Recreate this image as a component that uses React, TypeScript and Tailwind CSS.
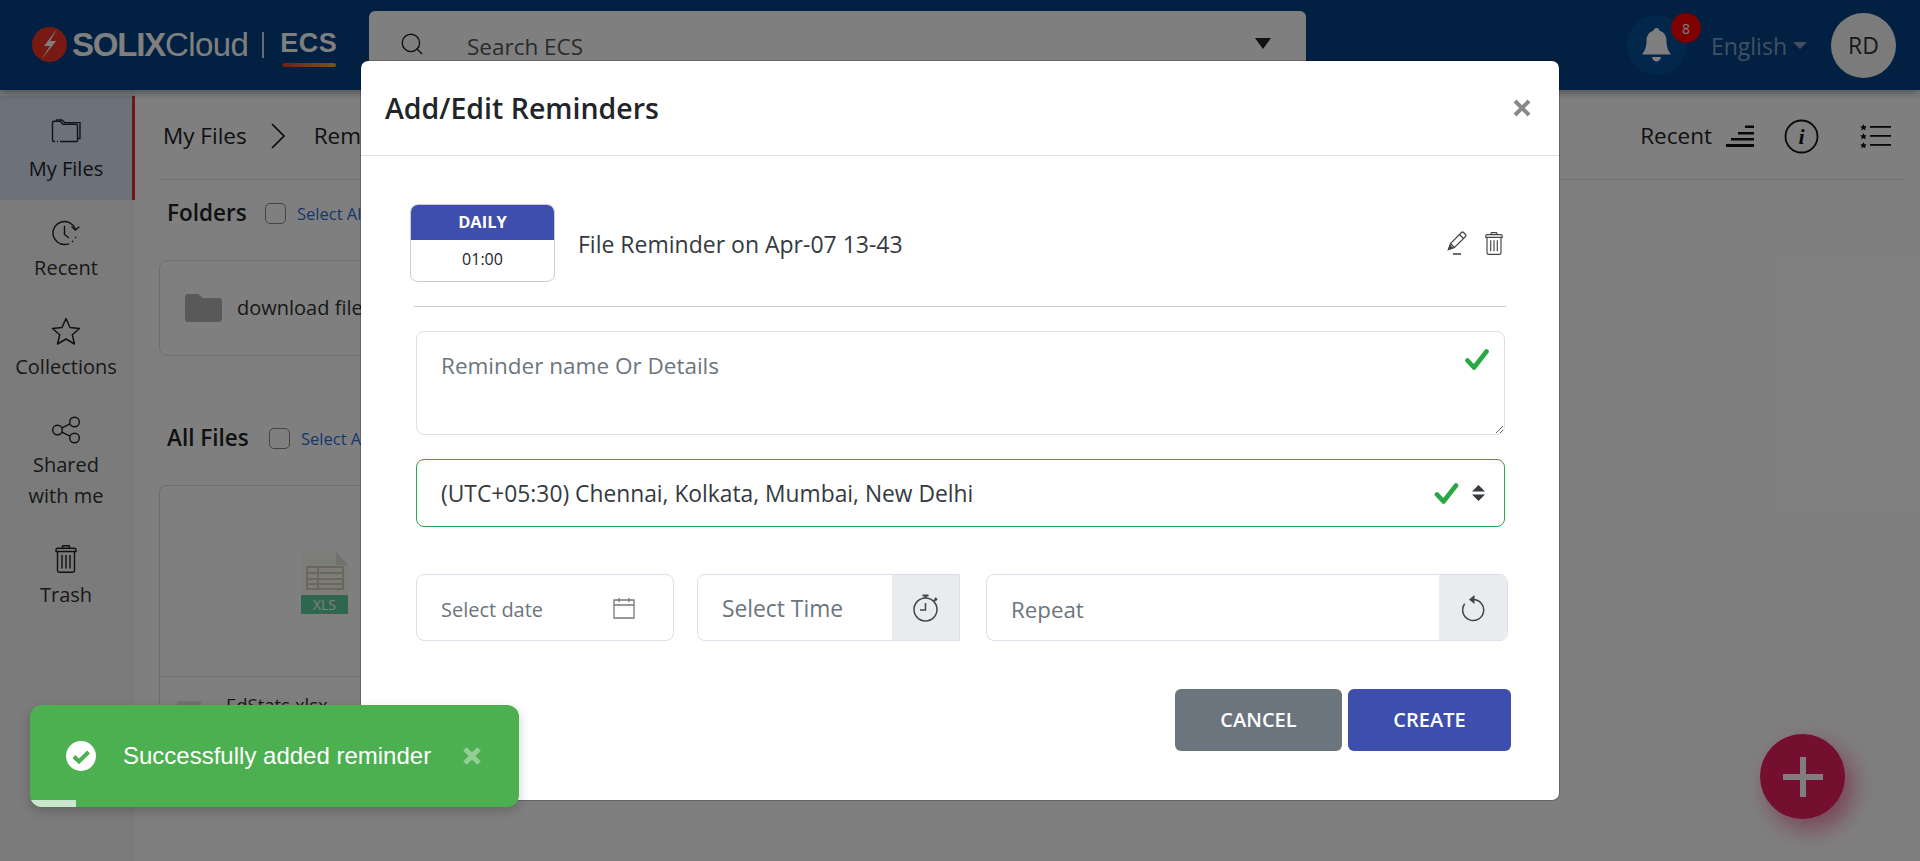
import { Search } from "lucide-react";

const sans = { fontFamily: '"Open Sans", sans-serif' };

function MyFilesIcon() {
  return (
    <svg width="30" height="24" viewBox="0 0 30 24" fill="none" stroke="#1f2937" strokeWidth="1.4">
      <path d="M1.5 21V3.5c0-.8.5-1.3 1.2-1.3h6.6l2.6 3h13.4c.7 0 1.2.5 1.2 1.2V21.6c0 .5-.4.9-1 .9H9" />
      <path d="M1.5 21c0 1 .5 1.5 1.2 1.5H4M6 22.5h1" />
      <path d="M5 1h6l2.6 2.6H29V19.5h-2" />
    </svg>
  );
}

function RecentIcon() {
  return (
    <svg width="30" height="26" viewBox="0 0 30 26" fill="none" stroke="#222" strokeWidth="1.4" strokeLinecap="round">
      <path d="M24 8.5A11.5 11.5 0 1 0 14 24.5c1.4 0 2.6-.2 3.6-.6" />
      <path d="M13.5 6.5v8l4 3" />
      <path d="M28 7l-3.6 3L21 7" />
      <path d="M21.5 21.5l.4-.3M24.5 17.5l.1-.3" />
    </svg>
  );
}

function StarIcon() {
  return (
    <svg width="30" height="28" viewBox="0 0 30 28" fill="none" stroke="#222" strokeWidth="1.5" strokeLinejoin="round">
      <path d="M15 1.5l4 9 9.5 1-7.2 6.3 2.2 9.2-8.5-5-8.5 5 2.2-9.2-7.2-6.3 9.5-1z" />
    </svg>
  );
}

function ShareIcon() {
  return (
    <svg width="30" height="28" viewBox="0 0 30 28" fill="none" stroke="#222" strokeWidth="1.4">
      <circle cx="6.5" cy="14" r="4.8" />
      <circle cx="23.5" cy="6" r="4.8" />
      <circle cx="23.5" cy="22" r="4.8" />
      <path d="M10.8 11.8l8.4-3.9M10.8 16.2l8.4 3.9" />
    </svg>
  );
}

function TrashIcon({ w, h, color }: { w: number; h: number; color: string }) {
  return (
    <svg width={w} height={h} viewBox="0 0 22 28" fill="none" stroke={color} strokeWidth="1.4">
      <path d="M7.5 3V1.5c0-.4.3-.7.7-.7h5.6c.4 0 .7.3.7.7V3" />
      <path d="M1 6.5V5c0-1 .8-1.8 1.8-1.8h16.4c1 0 1.8.8 1.8 1.8v1.5z" />
      <path d="M2.5 6.5v19c0 1 .7 1.7 1.7 1.7h13.6c1 0 1.7-.7 1.7-1.7v-19" />
      <path d="M7 10v13.5M11 10v13.5M15 10v13.5" />
    </svg>
  );
}

function SortIcon() {
  return (
    <svg width="28" height="22" viewBox="0 0 28 22" fill="#111">
      <rect x="0" y="19" width="28" height="3" />
      <rect x="5" y="13" width="23" height="2.5" />
      <rect x="12" y="7" width="16" height="2.5" />
      <rect x="19" y="0.5" width="9" height="2.5" />
    </svg>
  );
}

function StarListIcon() {
  return (
    <svg width="31" height="24" viewBox="0 0 31 24" fill="#111">
      <path d="M3.5 0l1 2.2 2.4.2-1.8 1.6.6 2.4-2.2-1.3L1.3 6.4l.6-2.4L.1 2.4l2.4-.2z" />
      <path d="M3.5 9l1 2.2 2.4.2-1.8 1.6.6 2.4-2.2-1.3-2.2 1.3.6-2.4-1.8-1.6 2.4-.2z" />
      <path d="M3.5 18l1 2.2 2.4.2-1.8 1.6.6 2.4-2.2-1.3-2.2 1.3.6-2.4-1.8-1.6 2.4-.2z" />
      <rect x="10" y="2" width="21" height="1.8" />
      <rect x="10" y="11" width="21" height="1.8" />
      <rect x="10" y="20" width="21" height="1.8" />
    </svg>
  );
}

function GreenCheck({ w, h }: { w: number; h: number }) {
  return (
    <svg width={w} height={h} viewBox="0 0 24 21" fill="none" stroke="#28a745" strokeWidth="4.6" strokeLinecap="round" strokeLinejoin="round">
      <path d="M2.5 11.5l6.5 7L21.5 2.5" />
    </svg>
  );
}

function SideItem({ icon, label, active }: { icon: React.ReactNode; label: React.ReactNode; active?: boolean }) {
  if (active) {
    return (
      <div className="flex h-[104px] flex-col items-center border-r-[3px] border-[#e52b2b] bg-[#d8e3f5] pt-[21px]">
        <div className="flex h-[27px] items-center justify-center">{icon}</div>
        <div className="mt-[9px] text-center text-[20px] leading-[31px] text-[#222]">{label}</div>
      </div>
    );
  }
  return (
    <div className="flex flex-col items-center pr-[3px]">
      <div className="flex h-[27px] items-center justify-center">{icon}</div>
      <div className="mt-[6px] text-center text-[20px] leading-[31px] text-[#333]">{label}</div>
    </div>
  );
}

function SelectRow({ title, titleWidth }: { title: string; titleWidth: string }) {
  return (
    <div className="flex h-[30px] items-center pl-[8px]">
      <div className={`${titleWidth} text-[22.5px] font-semibold text-[#222]`}>{title}</div>
      <div className="h-[21px] w-[21px] rounded-[5px] border border-[#888] bg-white"></div>
      <div className="mt-[2px] ml-[11px] text-[16.5px] font-medium text-[#2a6fd6]">Select All</div>
    </div>
  );
}

export default function App() {
  return (
    <div className="relative h-[861px] w-[1920px] overflow-hidden bg-white" style={sans}>
      <header className="relative z-10 flex h-[90px] bg-[#024184] shadow-[0_3px_8px_rgba(0,0,0,0.35)]">
        <div className="flex h-[90px] w-[369px] shrink-0 items-center pb-[1px] pl-[32px]">
          <svg width="35" height="35" viewBox="0 0 35 35">
            <circle cx="17.5" cy="17.5" r="17.5" fill="#f03526" />
            <path d="M25 2L12 19h6L9 33l15-19h-6z" fill="#fff" />
          </svg>
          <div className="ml-[5px] flex items-baseline text-[33px] leading-none text-white" style={{ fontFamily: '"Liberation Sans", sans-serif' }}>
            <span className="font-bold tracking-[-1.2px]">SOLIX</span>
            <span className="tracking-[-0.6px]">Cloud</span>
          </div>
          <div className="ml-[14px] h-[26px] w-[2px] bg-white/80"></div>
          <div className="ml-[16px] flex flex-col items-center pt-[6px]">
            <div className="text-[27px] leading-[28px] font-bold tracking-[0.5px] text-white" style={{ fontFamily: '"Liberation Sans", sans-serif' }}>ECS</div>
            <div className="mt-[6px] h-[4px] w-[54px] rounded-full bg-gradient-to-r from-[#e8342a] to-[#f5a623]"></div>
          </div>
        </div>
        <div className="mt-[11px] flex h-[70px] w-[937px] rounded-t-[6px] bg-white pt-[20px] pl-[30px]">
          <Search size={26} strokeWidth={1.3} color="#222" />
          <div className="ml-[42px] text-[22.5px] leading-[32px] text-[#555]">Search ECS</div>
          <div className="mt-[7px] mr-[35px] ml-auto h-0 w-0 border-x-[8px] border-t-[11px] border-x-transparent border-t-[#222]"></div>
        </div>
        <div className="ml-auto flex items-center pr-[24px]">
          <div className="relative flex h-[60px] w-[60px] items-center justify-center rounded-full bg-[#064c96]">
            <svg width="29" height="34" viewBox="0 0 29 34" fill="#fff">
              <path d="M14.5 0c1.6 0 2.8 1.2 2.8 2.6C22 4 24.5 8 24.5 13c0 6 1.5 9.5 4.5 13.5H0C3 22.5 4.5 19 4.5 13c0-5 2.5-9 7.2-10.4C11.7 1.2 12.9 0 14.5 0z" />
              <path d="M10 29h9c-.5 2.8-2.3 4.5-4.5 4.5S10.5 31.8 10 29z" />
            </svg>
            <div className="absolute top-[-2px] right-[-14px] flex h-[30px] w-[30px] items-center justify-center rounded-full bg-[#ff0000] text-[14px] text-white">8</div>
          </div>
          <div className="mt-[2px] ml-[24px] text-[23px] text-white/50">English</div>
          <div className="mt-[1px] ml-[6px] h-0 w-0 border-x-[7px] border-t-[7px] border-x-transparent border-t-white/50"></div>
          <div className="ml-[24px] flex h-[65px] w-[65px] items-center justify-center rounded-full bg-[#f7f7f7] text-[23px] text-[#333]">RD</div>
        </div>
      </header>

      <div className="flex h-[771px]">
        <aside className="w-[135px] shrink-0 bg-[#f6f6f6] pt-[6px]">
          <SideItem active icon={<MyFilesIcon />} label="My Files" />
          <div className="mt-[19px] flex flex-col gap-[34.5px]">
            <SideItem icon={<RecentIcon />} label="Recent" />
            <SideItem icon={<StarIcon />} label="Collections" />
            <SideItem icon={<ShareIcon />} label={<>Shared<br />with me</>} />
            <SideItem icon={<TrashIcon w={22} h={28} color="#222" />} label="Trash" />
          </div>
        </aside>

        <main className="min-w-0 flex-1 pr-[17px] pl-[24px]">
          <div className="flex h-[90px] items-center border-b border-[#ddd] pt-[3px] pl-[4px] text-[22.5px] text-[#222]">
            <span>My Files</span>
            <svg className="mr-[28px] ml-[23px]" width="16" height="26" viewBox="0 0 16 26" fill="none" stroke="#111" strokeWidth="1.6">
              <path d="M2 1l12 12L2 25" />
            </svg>
            <span>Reminders</span>
            <span className="ml-auto">Recent</span>
            <span className="ml-[14px]"><SortIcon /></span>
            <svg className="ml-[30px]" width="35" height="35" viewBox="0 0 35 35" fill="none">
              <circle cx="17.5" cy="17.5" r="16" stroke="#111" strokeWidth="1.8" />
              <text x="17.5" y="25" textAnchor="middle" fontSize="22" fontStyle="italic" fontWeight="700" fontFamily="Liberation Serif, serif" fill="#111">i</text>
            </svg>
            <span className="mr-[12px] ml-[41px]"><StarListIcon /></span>
          </div>

          <div className="mt-[18px]">
            <SelectRow title="Folders" titleWidth="w-[98px]" />
          </div>
          <div className="mt-[32px] flex h-[96px] w-[330px] items-center rounded-[8px] border border-[#ddd] pl-[25px]">
            <svg width="37" height="28" viewBox="0 0 37 28" fill="#b3b3b3">
              <path d="M0 3c0-1.7 1.3-3 3-3h10l5 4h16c1.7 0 3 1.3 3 3v18c0 1.7-1.3 3-3 3H3c-1.7 0-3-1.3-3-3z" />
            </svg>
            <span className="ml-[15px] whitespace-nowrap text-[20px] text-[#333]">download files</span>
          </div>

          <div className="mt-[67px]">
            <SelectRow title="All Files" titleWidth="w-[102px]" />
          </div>
          <div className="mt-[32px] w-[330px] rounded-t-[8px] border border-b-0 border-[#ddd]">
            <div className="flex h-[191px] items-center justify-center border-b border-[#ddd] pt-[3px]">
              <svg width="47" height="62" viewBox="0 0 47 62">
                <path d="M0 0h35l12 13v49H0z" fill="#fbfbf0" />
                <path d="M35 0l12 13H35z" fill="#e0e0d8" />
                <g fill="none" stroke="#d6ccbc" strokeWidth="2">
                  <path d="M6 15h36v22H6zM6 21h36M6 27h36M6 32h36M17 15v22" />
                </g>
                <rect x="0" y="43" width="47" height="19" fill="#5fcc9f" />
                <text x="23.5" y="58" textAnchor="middle" fontSize="14" fill="#fff" fontFamily="Open Sans, sans-serif">XLS</text>
              </svg>
            </div>
            <div className="flex items-start pt-[14px] pl-[17px]">
              <div className="mt-[10px] h-[30px] w-[24px] bg-[#e5e5e0]"></div>
              <div className="ml-[25px] text-[18.5px] text-[#333]">EdStats.xlsx</div>
            </div>
          </div>
        </main>
      </div>

      <div className="absolute top-[734px] left-[1760px] flex h-[85px] w-[85px] items-center justify-center rounded-full bg-[#ea1e60] shadow-[8px_10px_24px_rgba(234,30,96,0.55)]">
        <svg width="40" height="40" viewBox="0 0 40 40" fill="#fff">
          <rect x="17" y="0" width="6" height="40" />
          <rect x="0" y="17" width="40" height="6" />
        </svg>
      </div>

      <div className="absolute inset-0 z-20 bg-black/50"></div>

      <div className="absolute top-[60px] left-[360px] z-30 h-[741px] w-[1200px] rounded-[8px] border border-black/20 bg-white bg-clip-padding">
        <div className="flex h-[95px] items-center justify-between border-b border-[#dee2e6] pr-[28px] pl-[24px]">
          <h2 className="text-[28.5px] font-semibold text-[#212529]">Add/Edit Reminders</h2>
          <svg width="18" height="18" viewBox="0 0 18 18" stroke="#888" strokeWidth="4">
            <path d="M2 2l14 14M16 2L2 16" />
          </svg>
        </div>

        <div className="pt-[48px] pr-[48px] pl-[49px]">
          <div className="flex items-center pr-[7px]">
            <div className="w-[145px] overflow-hidden rounded-[8px] border border-[#ccc]">
              <div className="flex h-[35px] items-center justify-center bg-[#3d4eac] text-[16.5px] font-bold text-white">DAILY</div>
              <div className="flex h-[41px] items-center justify-center pb-[4px] text-[16px] text-[#212529]">01:00</div>
            </div>
            <div className="ml-[23px] pt-[2px] text-[23px] text-[#343a40]">File Reminder on Apr-07 13-43</div>
            <div className="ml-auto flex items-center gap-[17px]">
              <svg width="20" height="24" viewBox="0 0 20 24" fill="none" stroke="#444" strokeWidth="1.2">
                <path d="M1.5 18.5l2-6L14.5 1.5c.6-.6 1.4-.6 2 0l2 2c.6.6.6 1.4 0 2l-11 11z" />
                <path d="M3.5 12.5l4 4M12.5 3.5l4 4" />
                <path d="M1.5 18.5l4-1.5-2.500-2.500z" fill="#444" />
                <path d="M6 23h8" strokeWidth="1.6" />
              </svg>
              <TrashIcon w={20} h={23} color="#444" />
            </div>
          </div>

          <div className="mt-[24px] mr-[5px] ml-[4px] border-t border-[#ccc]"></div>

          <div className="relative mt-[24px] mr-[6px] ml-[6px]">
            <textarea
              className="block h-[104px] w-full resize-y rounded-[8px] border border-[#dedeea] px-[24px] py-[18px] text-[22.5px] leading-[32px] outline-none placeholder:text-[#6c757d]"
              placeholder="Reminder name Or Details"
            />
            <div className="absolute top-[18px] right-[16px]"><GreenCheck w={24} h={21} /></div>
          </div>

          <div className="mt-[24px] mr-[6px] ml-[6px] flex h-[68px] items-center rounded-[8px] border border-[#28a745] pr-[19px] pl-[24px]">
            <span className="pt-[2px] text-[22.8px] text-[#343a40]">(UTC+05:30) Chennai, Kolkata, Mumbai, New Delhi</span>
            <span className="ml-auto"><GreenCheck w={25} h={21} /></span>
            <svg className="ml-[13px]" width="13" height="16" viewBox="0 0 13 16" fill="#343a40">
              <path d="M6.5 0L13 6.5H0zM0 9.5h13L6.5 16z" />
            </svg>
          </div>

          <div className="mt-[47px] ml-[6px] flex pr-[2px]">
            <div className="flex h-[67px] w-[258px] items-center rounded-[8px] border border-[#dedeea] pr-[38px] pl-[24px]">
              <span className="pt-[4px] text-[20px] text-[#6c757d]">Select date</span>
              <svg className="ml-auto" width="22" height="22" viewBox="0 0 22 22" fill="none" stroke="#777" strokeWidth="1.3">
                <path d="M1 3h20v18H1zM1 8h20M6 1v4M16 1v4" />
              </svg>
            </div>
            <div className="ml-[23px] flex h-[67px] w-[263px] items-center rounded-l-[8px] border border-[#dedeea]">
              <span className="flex-1 pt-[4px] pl-[24px] text-[22.8px] text-[#6c757d]">Select Time</span>
              <div className="flex h-full w-[67px] items-center justify-center bg-[#e9ecef] pl-[1px]">
                <svg width="28" height="28" viewBox="0 0 28 28" fill="none" stroke="#444" strokeWidth="1.5">
                  <circle cx="13.5" cy="15.5" r="11.5" />
                  <path d="M13.5 9v7H8" />
                  <path d="M10.5 1.5h6M13.5 2v2M23 4l2 2M22 7l2-2" strokeWidth="2" />
                </svg>
              </div>
            </div>
            <div className="ml-[26px] flex h-[67px] w-[522px] items-center rounded-[8px] border border-[#dedeea]">
              <span className="flex-1 pt-[4px] pl-[24px] text-[22.3px] text-[#6c757d]">Repeat</span>
              <div className="flex h-full w-[68px] items-center justify-center rounded-r-[8px] bg-[#e9ecef] pl-[1px]">
                <svg width="24" height="28" viewBox="0 0 24 28" fill="none" stroke="#444" strokeWidth="1.5">
                  <path d="M11 5.5a10.500 10.500 0 1 1-8.300 4.300" />
                  <path d="M12.5 1L7 5.5l5.500 4.500z" fill="#444" stroke="none" />
                </svg>
              </div>
            </div>
          </div>

          <div className="mt-[48px] flex justify-end gap-[6px]">
            <div className="flex h-[62px] w-[167px] items-center justify-center rounded-[6px] bg-[#6c757d] text-[20px] font-semibold text-white">CANCEL</div>
            <div className="flex h-[62px] w-[163px] items-center justify-center rounded-[6px] bg-[#3d4eac] text-[20px] font-semibold text-white">CREATE</div>
          </div>
        </div>
      </div>

      <div className="absolute top-[705px] left-[30px] z-40 flex h-[102px] w-[489px] items-center overflow-hidden rounded-[12px] bg-[#4caf50] pl-[36px] shadow-[0_4px_12px_rgba(0,0,0,0.2)]" style={{ fontFamily: '"Liberation Sans", sans-serif' }}>
        <svg width="30" height="30" viewBox="0 0 30 30">
          <circle cx="15" cy="15" r="15" fill="#fff" />
          <path d="M8 15.5l5 5L22.5 11" fill="none" stroke="#4caf50" strokeWidth="4" />
        </svg>
        <span className="ml-[27px] text-[24px] text-white">Successfully added reminder</span>
        <svg className="ml-[32px]" width="18" height="18" viewBox="0 0 18 18" stroke="#fff" strokeOpacity="0.4" strokeWidth="5">
          <path d="M2 2l14 14M16 2L2 16" />
        </svg>
        <div className="absolute bottom-0 left-0 h-[7px] w-[46px] bg-white/70"></div>
      </div>
    </div>
  );
}
